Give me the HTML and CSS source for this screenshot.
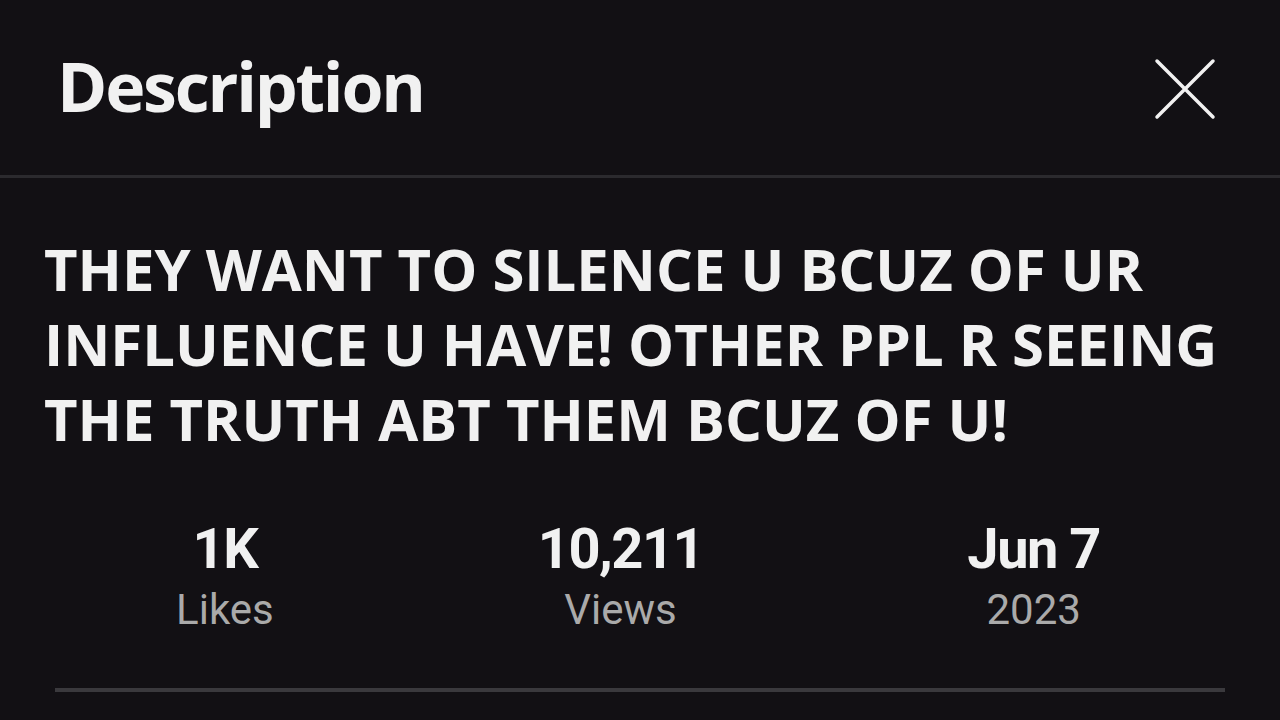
FILE: index.html
```html
<!DOCTYPE html>
<html lang="en">
<head>
    <meta charset="UTF-8">
    <meta name="viewport" content="width=device-width, initial-scale=1.0">
    <title>Description</title>
    <link rel="stylesheet" href="styles.css">
</head>
<body>
    <div class="sheet">
        <div class="sheet-header">
            <h1>Description</h1>
            <button class="close-btn" aria-label="Close">
                <svg width="62" height="62" viewBox="0 0 62 62">
                    <path d="M3 3 L59 59 M59 3 L3 59" stroke="#f1f1f1" stroke-width="3.5" stroke-linecap="round"/>
                </svg>
            </button>
        </div>

        <div class="sheet-body">
            <p class="title">THEY WANT TO SILENCE U BCUZ OF UR INFLUENCE U HAVE! OTHER PPL R SEEING THE TRUTH ABT THEM BCUZ OF U!</p>

            <div class="stats">
                <div class="stat">
                    <span class="stat-value">1K</span>
                    <span class="stat-label">Likes</span>
                </div>
                <div class="stat">
                    <span class="stat-value">10,211</span>
                    <span class="stat-label">Views</span>
                </div>
                <div class="stat">
                    <span class="stat-value">Jun 7</span>
                    <span class="stat-label">2023</span>
                </div>
            </div>

            <div class="rule"></div>
        </div>
    </div>
</body>
</html>
```

FILE: styles.css
```css
html, body {
    margin: 0;
    height: 100%;
    background: #121014;
}
body {
    color: #f1f1f1;
    font-family: "Open Sans", "Noto Sans", sans-serif;
    overflow: hidden;
}
.sheet-header {
    display: flex;
    align-items: center;
    justify-content: space-between;
    height: 178px;
    padding: 0 64px 0 57px;
    border-bottom: 3px solid #2b2a2e;
    box-sizing: border-box;
}
.sheet-header h1 {
    margin: 0 0 4px;
    font-size: 68px;
    font-weight: 700;
    letter-spacing: -2.2px;
}
.close-btn {
    background: none;
    border: 0;
    padding: 0;
    display: flex;
    margin-top: 2px;
}
.sheet-body {
    padding: 0 44px;
}
.title {
    margin: 53px 0 0;
    font-size: 58px;
    font-weight: 700;
    line-height: 75px;
    width: 1190px;
}
.stats {
    display: flex;
    justify-content: space-around;
    margin-top: 63px;
    padding-right: 4px;
}
.stat {
    display: flex;
    flex-direction: column;
    align-items: center;
}
.stat-value {
    font-family: Roboto, sans-serif;
    font-size: 56px;
    font-weight: 700;
    line-height: 60px;
    letter-spacing: -1.5px;
}
.stat-label {
    font-family: Roboto, sans-serif;
    font-size: 42px;
    color: #aaaaaa;
    line-height: 62px;
}
.rule {
    height: 4px;
    background: #3a393d;
    margin: 47px 11px 0;
}
```
